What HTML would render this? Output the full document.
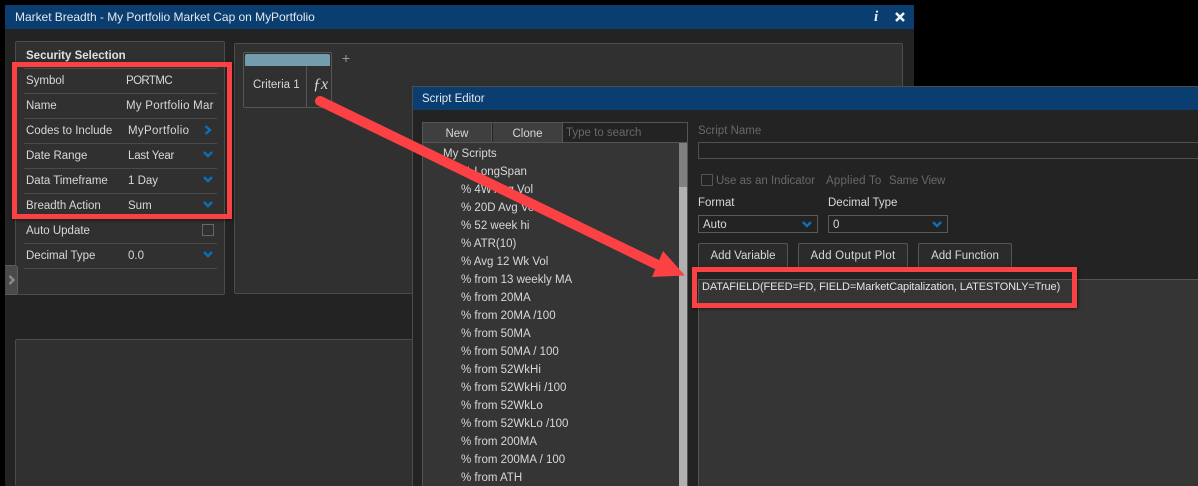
<!DOCTYPE html>
<html><head><meta charset="utf-8"><style>
html,body{margin:0;padding:0;background:#000;overflow:hidden;width:1198px;height:486px}
body{position:relative;font-family:"Liberation Sans",sans-serif;font-size:11.5px;color:#d8d8d8}
div{position:absolute;box-sizing:border-box}
.t{white-space:nowrap;line-height:16px;height:16px;margin-top:1px}
.sep{height:1px;background:#4a4a4a;left:24px;width:193px}
.p{background:#303030;border:1px solid #4c4c4c;border-radius:2px}
.d{color:#686868}
.btn{border:1px solid #555;border-bottom:none;border-radius:2px 2px 0 0;background:#2b2b2b;text-align:center;line-height:25px;height:25px;top:243px}
.sel{border:1px solid #5a5a5a;top:215px;height:18px;background:#232323}
svg{position:absolute;overflow:visible}
</style></head><body>
<!-- main window -->
<div style="left:5px;top:5px;width:909px;height:481px;background:#232323"></div>
<div style="left:5px;top:5px;width:909px;height:24px;background:#0a3d70"></div>
<div class="t" style="left:15px;top:8px;color:#e4e8ec;font-size:12px;letter-spacing:-.03px">Market Breadth - My Portfolio Market Cap on MyPortfolio</div>
<div style="left:874px;top:8px;font:italic bold 15px/18px 'Liberation Serif',serif;color:#e8eef4">i</div>
<svg style="left:895px;top:12px" width="10" height="10"><path d="M1 1L9 9M9 1L1 9" stroke="#eef2f6" stroke-width="2.6"/></svg>

<!-- security panel -->
<div class="p" style="left:15px;top:41px;width:210px;height:254px"></div>
<div class="t" style="left:26px;top:47px;font-weight:bold;color:#e0e0e0">Security Selection</div>
<div class="sep" style="top:68px"></div><div class="sep" style="top:93px"></div><div class="sep" style="top:118px"></div><div class="sep" style="top:143px"></div><div class="sep" style="top:168px"></div><div class="sep" style="top:193px"></div><div class="sep" style="top:218px"></div><div class="sep" style="top:243px"></div><div class="sep" style="top:268px"></div>
<div class="t" style="left:26px;top:72px">Symbol</div><div class="t" style="left:126px;top:72px;letter-spacing:-.6px">PORTMC</div>
<div class="t" style="left:26px;top:97px">Name</div><div class="t" style="left:126px;top:97px;width:88px;overflow:hidden;letter-spacing:.25px">My Portfolio Mar</div>
<div class="t" style="left:26px;top:122px">Codes to Include</div><div class="t" style="left:128px;top:122px;letter-spacing:.35px">MyPortfolio</div>
<div class="t" style="left:26px;top:147px">Date Range</div><div class="t" style="left:128px;top:147px;letter-spacing:-.2px">Last Year</div>
<div class="t" style="left:26px;top:172px">Data Timeframe</div><div class="t" style="left:128px;top:172px">1 Day</div>
<div class="t" style="left:26px;top:197px">Breadth Action</div><div class="t" style="left:128px;top:197px">Sum</div>
<div class="t" style="left:26px;top:222px">Auto Update</div>
<div style="left:202px;top:224px;width:12px;height:12px;border:1px solid #666"></div>
<div class="t" style="left:26px;top:247px">Decimal Type</div><div class="t" style="left:128px;top:247px">0.0</div>
<svg style="left:204px;top:125px" width="8" height="10"><path d="M1.5 1L6 5L1.5 9" fill="none" stroke="#0a70bb" stroke-width="2.4"/></svg>
<svg style="left:203px;top:151px" width="10" height="7"><path d="M1 1L5 5L9 1" fill="none" stroke="#0a70bb" stroke-width="2.4"/></svg>
<svg style="left:203px;top:176px" width="10" height="7"><path d="M1 1L5 5L9 1" fill="none" stroke="#0a70bb" stroke-width="2.4"/></svg>
<svg style="left:203px;top:201px" width="10" height="7"><path d="M1 1L5 5L9 1" fill="none" stroke="#0a70bb" stroke-width="2.4"/></svg>
<svg style="left:203px;top:251px" width="10" height="7"><path d="M1 1L5 5L9 1" fill="none" stroke="#0a70bb" stroke-width="2.4"/></svg>
<div style="left:5px;top:265px;width:13px;height:30px;background:#4a4a4a;border:1px solid #5c5c5c;border-left:none;border-radius:0 3px 3px 0"></div>
<svg style="left:8px;top:275px" width="8" height="10"><path d="M1.5 1L5.5 5L1.5 9" fill="none" stroke="#8a8a8a" stroke-width="2.4"/></svg>

<!-- criteria panel -->
<div class="p" style="left:234px;top:43px;width:669px;height:251px"></div>
<div style="left:243px;top:52px;width:89px;height:56px;border:1px solid #555;border-radius:2px;background:#303030"></div>
<div style="left:245px;top:54px;width:85px;height:12px;background:#739dae;border-radius:2px 2px 0 0"></div>
<div style="left:306px;top:66px;width:1px;height:41px;background:#555"></div>
<div class="t" style="left:253px;top:76px">Criteria 1</div>
<div style="left:313px;top:75px;font:italic 16px/20px 'Liberation Serif',serif;color:#d8d8d8">ƒx</div>
<svg style="left:342px;top:55px" width="8" height="8"><path d="M0.5 3.5H7.500M4 0V7" stroke="#999" stroke-width="1"/></svg>

<!-- bottom panel -->
<div class="p" style="left:15px;top:339px;width:888px;height:147px;border-bottom:none"></div>

<!-- script editor -->
<div style="left:412px;top:86px;width:786px;height:400px;background:#232323;border:1px solid #4c4c4c;border-right:none;border-bottom:none"></div>
<div style="left:413px;top:87px;width:785px;height:23px;background:#0a3d70"></div>
<div class="t" style="left:422px;top:90px;color:#e4e8ec">Script Editor</div>

<div style="left:422px;top:122px;width:266px;height:21px;border:1px solid #555;background:#232323"></div>
<div style="left:423px;top:123px;width:69px;height:19px;background:#3f3f3f;border-right:1px solid #555;text-align:center;line-height:22px">New</div>
<div style="left:493px;top:123px;width:70px;height:19px;background:#3f3f3f;border-right:1px solid #555;text-align:center;line-height:22px">Clone</div>
<div class="t d" style="left:566px;top:124px">Type to search</div>

<div style="left:422px;top:143px;width:266px;height:343px;background:#353535;border-left:1px solid #555;border-right:1px solid #555"></div>
<div style="left:679px;top:143px;width:8px;height:343px;background:#b0b0b0"></div>
<div style="left:679px;top:143px;width:8px;height:44px;background:#808080"></div>
<div class="t" style="left:443px;top:145px">My Scripts</div>
<div class="t" style="left:461px;top:163px">% LongSpan</div>
<div class="t" style="left:461px;top:181px">% 4W Avg Vol</div>
<div class="t" style="left:461px;top:199px">% 20D Avg Vol</div>
<div class="t" style="left:461px;top:217px">% 52 week hi</div>
<div class="t" style="left:461px;top:235px">% ATR(10)</div>
<div class="t" style="left:461px;top:253px">% Avg 12 Wk Vol</div>
<div class="t" style="left:461px;top:271px">% from 13 weekly MA</div>
<div class="t" style="left:461px;top:289px">% from 20MA</div>
<div class="t" style="left:461px;top:307px">% from 20MA /100</div>
<div class="t" style="left:461px;top:325px">% from 50MA</div>
<div class="t" style="left:461px;top:343px">% from 50MA / 100</div>
<div class="t" style="left:461px;top:361px">% from 52WkHi</div>
<div class="t" style="left:461px;top:379px">% from 52WkHi /100</div>
<div class="t" style="left:461px;top:397px">% from 52WkLo</div>
<div class="t" style="left:461px;top:415px">% from 52WkLo /100</div>
<div class="t" style="left:461px;top:433px">% from 200MA</div>
<div class="t" style="left:461px;top:451px">% from 200MA / 100</div>
<div class="t" style="left:461px;top:469px">% from ATH</div>

<div class="t d" style="left:698px;top:122px">Script Name</div>
<div style="left:698px;top:142px;width:510px;height:17px;border:1px solid #505050"></div>
<div style="left:701px;top:174px;width:12px;height:12px;border:1px solid #555"></div>
<div class="t d" style="left:716px;top:172px">Use as an Indicator</div>
<div class="t d" style="left:826px;top:172px;letter-spacing:.2px">Applied To</div>
<div class="t d" style="left:889px;top:172px;letter-spacing:-.2px">Same View</div>
<div class="t" style="left:698px;top:194px">Format</div>
<div class="t" style="left:828px;top:194px">Decimal Type</div>
<div class="sel" style="left:698px;width:120px"></div>
<div class="sel" style="left:828px;width:120px"></div>
<div class="t" style="left:703px;top:216px">Auto</div>
<div class="t" style="left:833px;top:216px">0</div>
<svg style="left:802px;top:221px" width="10" height="7"><path d="M1 1L5 5L9 1" fill="none" stroke="#0a70bb" stroke-width="2.4"/></svg>
<svg style="left:932px;top:221px" width="10" height="7"><path d="M1 1L5 5L9 1" fill="none" stroke="#0a70bb" stroke-width="2.4"/></svg>
<div class="btn" style="left:698px;width:90px">Add Variable</div>
<div class="btn" style="left:798px;width:110px;letter-spacing:.25px">Add Output Plot</div>
<div class="btn" style="left:918px;width:94px">Add Function</div>
<div style="left:698px;top:279px;width:500px;height:207px;background:#353535;border:1px solid #555;border-right:none;border-bottom:none"></div>
<div class="t" style="left:702px;top:278px;font-size:11px;letter-spacing:-.1px;color:#e4e4e4">DATAFIELD(FEED=FD, FIELD=MarketCapitalization, LATESTONLY=True)</div>

<!-- annotations -->
<div style="left:12px;top:62px;width:220px;height:157px;border:5px solid #fb4143;box-shadow:1px 1px 3px rgba(0,0,0,.5)"></div>
<div style="left:692px;top:267px;width:385px;height:41px;border:5px solid #fb4143;box-shadow:1px 1px 3px rgba(0,0,0,.5)"></div>
<svg style="left:0;top:0" width="1198" height="486">
<path d="M320 101L662 267" stroke="#fb4143" stroke-width="10" stroke-linecap="round" fill="none"/>
<path d="M663 251L685 275.500L652 277Z" fill="#fb4143"/>
</svg>
</body></html>
